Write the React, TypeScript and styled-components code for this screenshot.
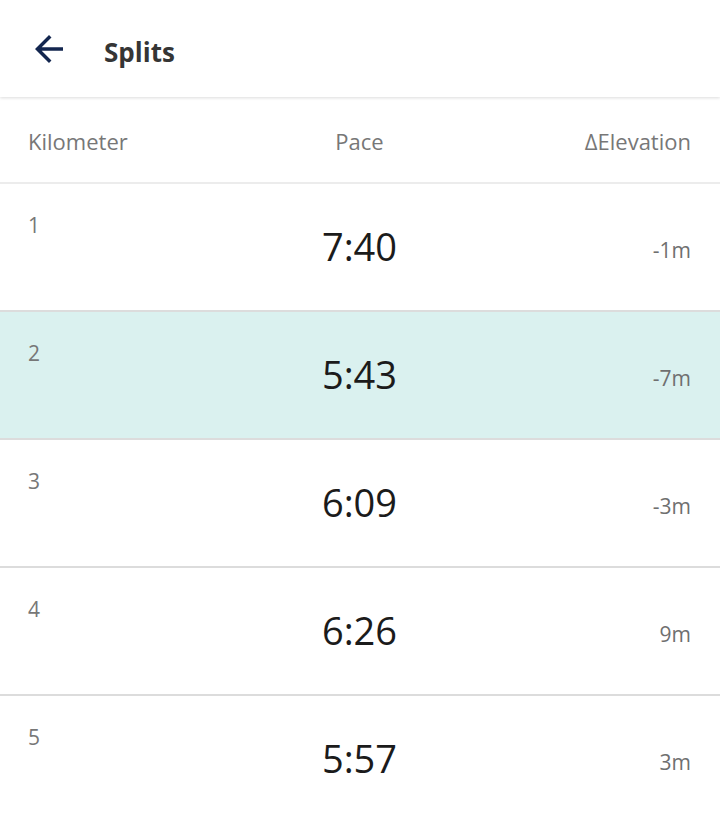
import React from "react";
import styled, { createGlobalStyle } from "styled-components";

const Global = createGlobalStyle`
  html, body { margin: 0; padding: 0; background: #ffffff; }
  body { font-family: "Open Sans", "Noto Sans", sans-serif; -webkit-font-smoothing: antialiased; }
`;

const Page = styled.div`
  width: 720px;
  display: flex;
  flex-direction: column;
`;

const Header = styled.header`
  height: 97px;
  box-sizing: border-box;
  display: flex;
  align-items: center;
  padding: 6px 0 0 28px;
  gap: 34px;
  background: #fff;
  box-shadow: 0 1px 3px rgba(0, 0, 0, 0.14);
  position: relative;
  z-index: 1;
`;

const BackButton = styled.button`
  width: 42px;
  height: 42px;
  margin-top: -5px;
  padding: 0;
  border: none;
  background: none;
  display: flex;
  color: #13264f;
`;

const Title = styled.h1`
  margin: 0;
  font-size: 26px;
  line-height: 1;
  font-weight: 700;
  color: #353535;
`;

const Grid = styled.div`
  display: grid;
  grid-template-columns: 1fr auto 1fr;
  padding: 0 29px 0 28px;
  box-sizing: border-box;
`;

const ColumnHeader = styled(Grid)`
  height: 87px;
  align-items: center;
  padding-top: 2px;
  border-bottom: 2px solid #ececec;
`;

const HeadCell = styled.div<{ $align: "left" | "center" | "right" }>`
  font-size: 22px;
  line-height: 1;
  color: #777777;
  text-align: ${(p) => p.$align};
`;

const Row = styled(Grid)<{ $highlight?: boolean }>`
  height: 128px;
  align-items: start;
  border-bottom: 2px solid #dcdcdc;
  background: ${(p) => (p.$highlight ? "#daf1ef" : "#ffffff")};
`;

const Index = styled.div`
  margin-top: 31px;
  font-size: 21px;
  line-height: 1;
  color: #777777;
`;

const Pace = styled.div`
  margin-top: 43px;
  font-size: 38px;
  line-height: 1;
  color: #1b1b1b;
  text-align: center;
`;

const Elevation = styled.div`
  margin-top: 56px;
  font-size: 21px;
  line-height: 1;
  color: #6f6f6f;
  text-align: right;
`;

const splits = [
  { km: 1, pace: "7:40", elev: "-1m" },
  { km: 2, pace: "5:43", elev: "-7m", highlight: true },
  { km: 3, pace: "6:09", elev: "-3m" },
  { km: 4, pace: "6:26", elev: "9m" },
  { km: 5, pace: "5:57", elev: "3m" },
];

export default function App() {
  return (
    <Page>
      <Global />
      <Header>
        <BackButton aria-label="Back">
          <svg width="42" height="42" viewBox="0 0 24 24" fill="currentColor">
            <path d="M20 11H7.83l5.59-5.59L12 4l-8 8 8 8 1.41-1.41L7.83 13H20v-2z" />
          </svg>
        </BackButton>
        <Title>Splits</Title>
      </Header>
      <ColumnHeader>
        <HeadCell $align="left">Kilometer</HeadCell>
        <HeadCell $align="center">Pace</HeadCell>
        <HeadCell $align="right">ΔElevation</HeadCell>
      </ColumnHeader>
      {splits.map((s) => (
        <Row key={s.km} $highlight={s.highlight}>
          <Index>{s.km}</Index>
          <Pace>{s.pace}</Pace>
          <Elevation>{s.elev}</Elevation>
        </Row>
      ))}
    </Page>
  );
}
